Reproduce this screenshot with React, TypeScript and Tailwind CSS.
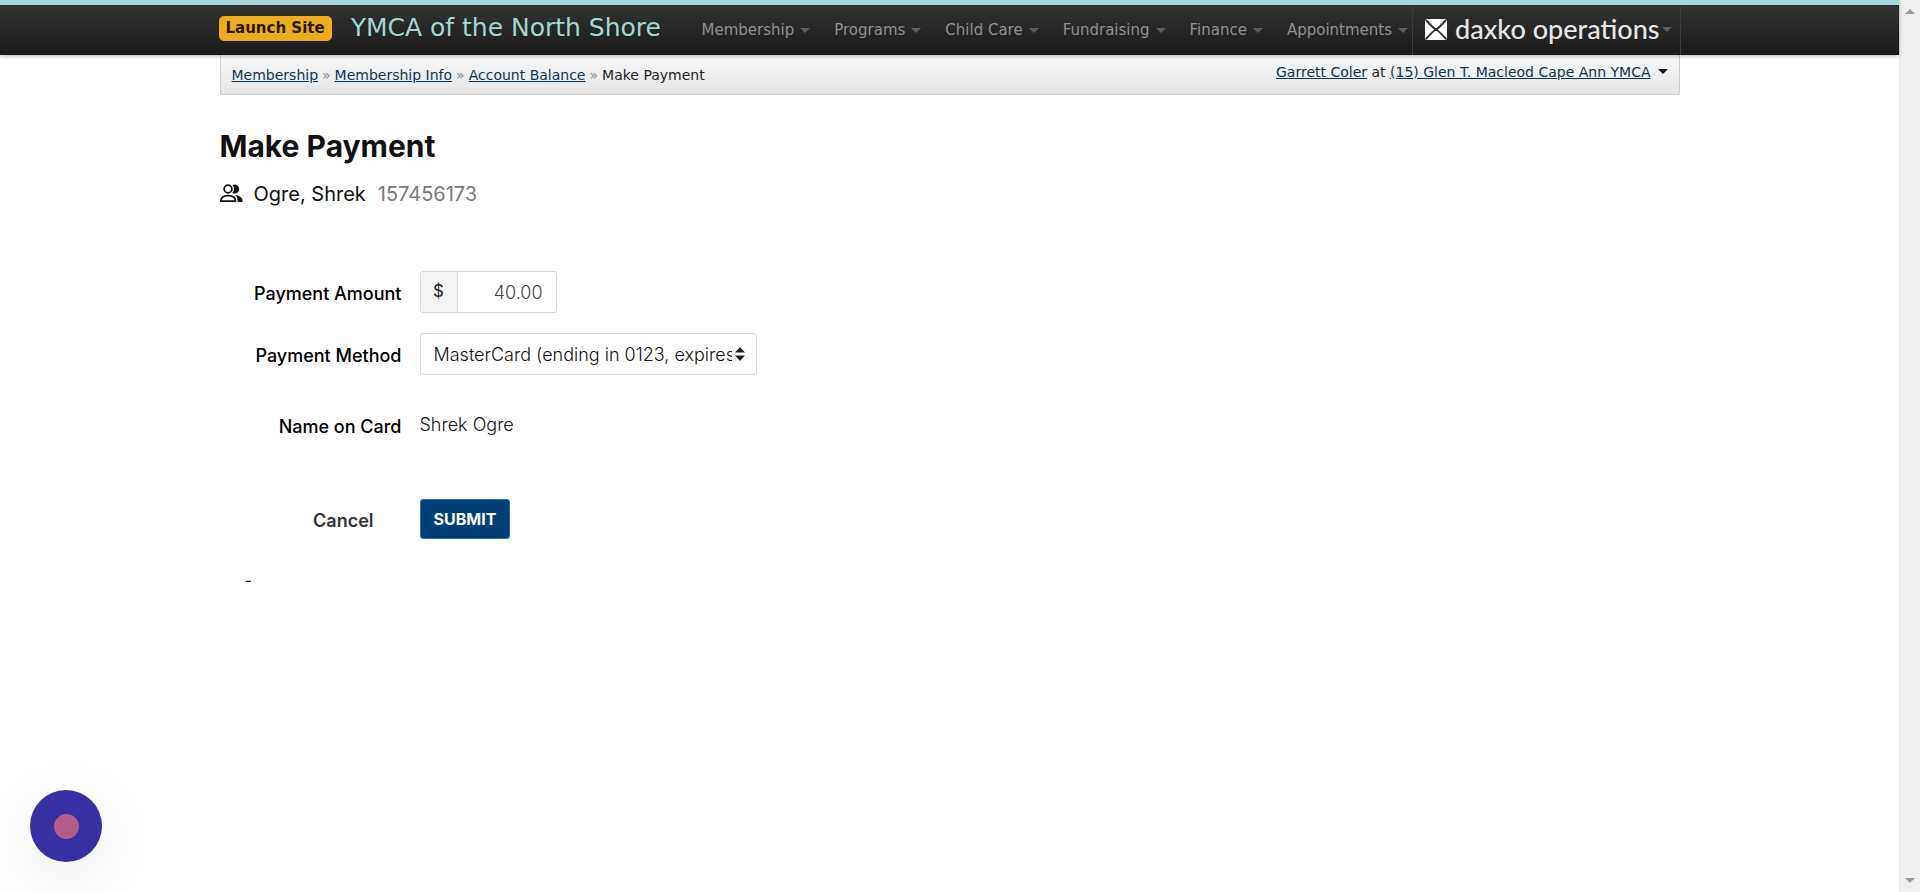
import React from "react";

const menu = ["Membership", "Programs", "Child Care", "Fundraising", "Finance", "Appointments"];
const crumbs = ["Membership", "Membership Info", "Account Balance"];

function Caret({ className }: { className: string }) {
  return (
    <svg viewBox="0 0 10 5" className={`h-[5px] w-[10px] shrink-0 ${className}`} fill="currentColor" aria-hidden="true">
      <path d="M0 0h10L5 5z" />
    </svg>
  );
}

function DaxkoMark() {
  return (
    <svg viewBox="0 0 22 21" className="h-[21px] w-[22px] shrink-0" aria-hidden="true">
      <rect width="22" height="21" rx="2.500" fill="#fff" />
      <path d="M1 1Q8 9 11 10.500Q14 9 21 1M1 20Q8 12 11 10.500Q14 12 21 20" fill="none" stroke="#2e2e2e" strokeWidth="1.900" />
      <circle cx="11" cy="10.500" r="1.800" fill="#2e2e2e" />
    </svg>
  );
}

function MembersIcon() {
  return (
    <svg viewBox="1 0 24 20" className="h-5 w-6 shrink-0" aria-hidden="true">
      <path d="M13.500 1.100a4.500 4.500 0 1 1 0 7.900a6.500 6.500 0 0 0 0-7.900z" fill="#111" />
      <path d="M16 11c4.900.8 7.500 2.600 7.500 5.500V18h-4.900v-1.500c0-2.200-1-4.200-2.600-5.500z" fill="#111" />
      <circle cx="9" cy="5" r="3.900" fill="#fff" stroke="#111" strokeWidth="1.700" />
      <path d="M1.800 17.200c0-3.700 2.900-5.500 7.200-5.500s7.500 1.800 7.500 5.500z" fill="#fff" stroke="#111" strokeWidth="1.700" strokeLinejoin="round" />
    </svg>
  );
}

function Header() {
  return (
    <header className="relative z-10 border-t-[5px] border-[#a3d9da] bg-linear-to-b from-[#333] to-[#1a1a1a] shadow-[0_1px_4px_rgba(0,0,0,0.3)]">
      <div className="mx-auto flex h-[50px] max-w-[1462px] items-center">
        <div className="flex items-center gap-[19px] pb-1">
          <button className="h-[25px] rounded-[5px] bg-[#edac1d] px-[7px] text-[15px] leading-6 font-bold whitespace-nowrap text-[#2c1903]">
            Launch Site
          </button>
          <a href="#home" className="text-[25px] leading-8 whitespace-nowrap text-[#a5d6d2]">
            YMCA of the North Shore
          </a>
        </div>
        <nav className="ml-auto flex items-center gap-6 pr-1">
          {menu.map((item) => (
            <a key={item} href="#menu" className="flex items-center gap-1.5 text-[15px] leading-6 whitespace-nowrap text-[#8f8f8f]">
              {item}
              <Caret className="text-[#5e5e5e]" />
            </a>
          ))}
        </nav>
        <button className="flex h-full items-center gap-2 border-x border-[#3c3c3c] pr-2 pb-0.5 pl-3">
          <DaxkoMark />
          <span className="flex items-center gap-0.5">
            <span className="font-['Lato',sans-serif] text-[27px] leading-8 font-medium whitespace-nowrap text-[#e6e6e6]">
              daxko operations
            </span>
            <Caret className="text-[#5e5e5e]" />
          </span>
        </button>
      </div>
    </header>
  );
}

function Breadcrumbs() {
  return (
    <div className="mx-auto flex h-10 max-w-[1460px] items-center justify-between rounded-b-[3px] border border-t-0 border-[#ccc] bg-linear-to-b from-[#f8f8f8] to-[#e6e6e6] px-[11px] text-[14px] leading-5 text-[#222]">
      <nav className="flex gap-1 whitespace-nowrap">
        {crumbs.map((c) => (
          <React.Fragment key={c}>
            <a href="#crumb" className="text-[#0c3554] underline">{c}</a>
            <span className="text-[#888]">»</span>
          </React.Fragment>
        ))}
        <span>Make Payment</span>
      </nav>
      <div className="flex items-center gap-[7px] pb-1.5 whitespace-nowrap">
        <span>
          <a href="#user" className="text-[#0c3554] underline">Garrett Coler</a> at{" "}
          <a href="#branch" className="text-[#0c3554] underline">(15) Glen T. Macleod Cape Ann YMCA</a>
        </span>
        <Caret className="text-black" />
      </div>
    </div>
  );
}

const row = "grid grid-cols-[182px_1fr] items-center gap-[18px]";
const labelText = "pt-1 text-right text-[18px] leading-6 font-medium text-black";

function PaymentForm() {
  return (
    <form className="mt-[63px]" onSubmit={(e) => e.preventDefault()}>
      <div className={row}>
        <label htmlFor="amount" className={labelText}>Payment Amount</label>
        <div className="flex h-[42px] w-[137px] rounded-[3px] border border-[#d6d6d6]">
          <span className="flex w-[37px] shrink-0 items-center justify-center border-r border-[#d6d6d6] bg-[#f3f3f3] text-[17px] text-[#222]">$</span>
          <input id="amount" defaultValue="40.00" className="w-full min-w-0 pr-[13px] text-right text-[18px] font-light text-[#444] outline-none" />
        </div>
      </div>
      <div className={`mt-5 ${row}`}>
        <label htmlFor="method" className={labelText}>Payment Method</label>
        <div className="relative w-[337px]">
          <select id="method" className="block h-[42px] w-full appearance-none rounded-[3px] border border-[#d6d6d6] bg-white pr-6 pl-[13px] text-[18px] font-light text-[#111] outline-none">
            <option>MasterCard (ending in 0123, expires 12/2025)</option>
          </select>
          <svg viewBox="0 0 10 14" className="pointer-events-none absolute top-3.5 right-3 h-3.5 w-2.5" fill="#222" aria-hidden="true">
            <path d="M0 5.500L5 0l5 5.500zM0 8.500h10L5 14z" />
          </svg>
        </div>
      </div>
      <div className={`mt-9 ${row}`}>
        <span className={labelText}>Name on Card</span>
        <span className="text-[18px] leading-6 font-light text-[#111]">Shrek Ogre</span>
      </div>
      <div className={`mt-[60px] ${row}`}>
        <a href="#cancel" className="pt-1 pr-7 text-right text-[18px] leading-6 font-semibold text-[#333]">Cancel</a>
        <button className="h-10 justify-self-start rounded-[3px] border border-[#35719f] bg-[#003f75] px-[13px] text-[16px] font-bold text-white">
          SUBMIT
        </button>
      </div>
    </form>
  );
}

export default function App() {
  return (
    <div className="flex min-h-screen bg-white font-['DejaVu_Sans',Verdana,sans-serif]">
      <div className="min-w-0 flex-1">
        <Header />
        <Breadcrumbs />
        <main className="mx-auto max-w-[1460px] font-['Inter',sans-serif]">
          <h1 className="pt-[31px] text-[30px] leading-10 font-bold text-[#111]">Make Payment</h1>
          <div className="mt-3.5 flex items-center text-[20px] leading-7 text-[#111]">
            <MembersIcon />
            <span className="ml-2.5">Ogre, Shrek</span>
            <span className="ml-3 text-[#7a7a7a]">157456173</span>
          </div>
          <PaymentForm />
          <p className="mt-[29px] pl-[25px] text-[16px] leading-6 text-black">-</p>
        </main>
      </div>
      <div className="flex w-[21px] flex-col items-center justify-between border-l border-[#e6e6e6] bg-[#f0f0f0] py-[9px] text-[#9b9b9b]" aria-hidden="true">
        <Caret className="rotate-180" />
        <Caret className="" />
      </div>
      <button
        aria-label="Record"
        className="fixed bottom-[30px] left-[30px] flex size-[72px] items-center justify-center rounded-full bg-[#372fa2] shadow-[0_16px_60px_rgba(0,0,0,0.08)]"
      >
        <span className="size-[25px] rounded-full bg-[#b25e8b]" />
      </button>
    </div>
  );
}
